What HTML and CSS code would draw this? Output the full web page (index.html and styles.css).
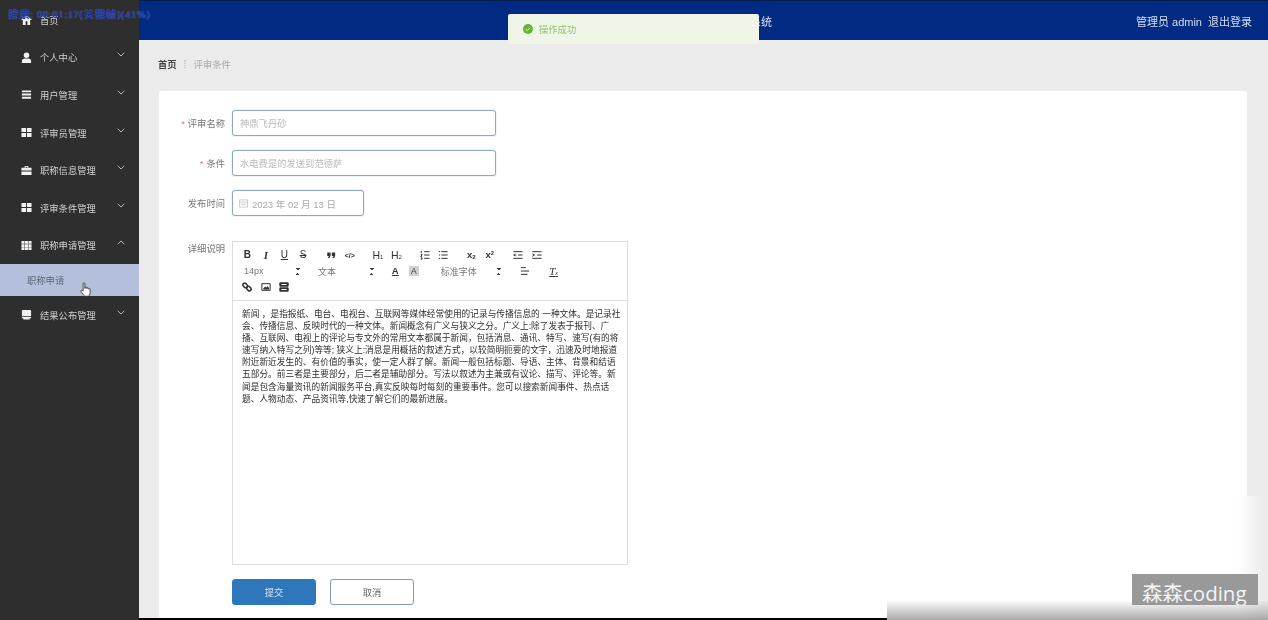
FILE: index.html
```html
<!DOCTYPE html>
<html lang="zh-CN">
<head>
    <meta charset="UTF-8">
    <meta name="viewport" content="width=device-width, initial-scale=1.0">
    <title>评审条件</title>
    <link rel="stylesheet" href="styles.css">
</head>
<body>
    <div class="app">
        <aside class="sidebar">
            <div class="menu-item">
                <svg class="menu-icon" viewBox="0 0 12 12"><path d="M6 1 0 6.500h2V12h3V8h2v4h3V6.500h2z"/></svg>
                <span>首页</span>
            </div>
            <div class="menu-item">
                <svg class="menu-icon" viewBox="0 0 12 12"><circle cx="6" cy="3.500" r="3"/><path d="M1 12V9.500C1 8 2.500 7 4 7h4c1.500 0 3 1 3 2.500V12z"/></svg>
                <span>个人中心</span>
                <svg class="chevron" viewBox="0 0 8 5"><path d="M.7.8 4 4 7.300.8"/></svg>
            </div>
            <div class="menu-item">
                <svg class="menu-icon" viewBox="0 0 12 12"><path d="M1 1.500h10v2H1zM1 5h10v2H1zM1 8.500h10v2H1z"/></svg>
                <span>用户管理</span>
                <svg class="chevron" viewBox="0 0 8 5"><path d="M.7.8 4 4 7.300.8"/></svg>
            </div>
            <div class="menu-item">
                <svg class="menu-icon" viewBox="0 0 12 12"><path d="M.5 1h5v4.500h-5zM6.500 1h5v4.500h-5zM.5 6.500h5V11h-5zM6.500 6.500h5V11h-5z"/></svg>
                <span>评审员管理</span>
                <svg class="chevron" viewBox="0 0 8 5"><path d="M.7.8 4 4 7.300.8"/></svg>
            </div>
            <div class="menu-item">
                <svg class="menu-icon" viewBox="0 0 12 12"><path d="M4 1h4v2h3.500v3H.5V3H4zM5 2v1h2V2zM.5 7h11v4H.5z"/></svg>
                <span>职称信息管理</span>
                <svg class="chevron" viewBox="0 0 8 5"><path d="M.7.8 4 4 7.300.8"/></svg>
            </div>
            <div class="menu-item">
                <svg class="menu-icon" viewBox="0 0 12 12"><path d="M.5 1h5v4.500h-5zM6.500 1h5v4.500h-5zM.5 6.500h5V11h-5zM6.500 6.500h5V11h-5z"/></svg>
                <span>评审条件管理</span>
                <svg class="chevron" viewBox="0 0 8 5"><path d="M.7.8 4 4 7.300.8"/></svg>
            </div>
            <div class="menu-item">
                <svg class="menu-icon" viewBox="0 0 12 12"><path d="M.5 1h3.300v3H.5zM4.300 1h3.400v3H4.300zM8.200 1h3.300v3H8.200zM.5 4.500h3.300v3H.5zM4.300 4.500h3.400v3H4.300zM8.200 4.500h3.300v3H8.200zM.5 8h3.300v3H.5zM4.300 8h3.400v3H4.300zM8.200 8h3.300v3H8.200z"/></svg>
                <span>职称申请管理</span>
                <svg class="chevron" viewBox="0 0 8 5"><path d="M.7 4.200 4 1l3.300 3.200"/></svg>
            </div>
            <div class="submenu-item">职称申请</div>
            <div class="menu-item">
                <svg class="menu-icon" viewBox="0 0 12 12"><path d="M2 1h8a1 1 0 0 1 1 1v6H1V2a1 1 0 0 1 1-1zM1 8.800h10V10H9.500v1.500h-7V10H1z"/></svg>
                <span>结果公布管理</span>
                <svg class="chevron" viewBox="0 0 8 5"><path d="M.7.8 4 4 7.300.8"/></svg>
            </div>
        </aside>

        <div class="main">
            <header class="topbar">
                <div class="topbar-title">职称评审管理系统</div>
                <div class="topbar-user">管理员 admin<span class="logout">退出登录</span></div>
            </header>

            <div class="content">
                <div class="breadcrumb">
                    <b>首页</b>
                    <i class="crumb-sep"></i>
                    <span>评审条件</span>
                </div>

                <div class="card">
                    <div class="form-row">
                        <label class="form-label"><em>*</em>评审名称</label>
                        <input class="field" type="text" placeholder="神鼎飞丹砂">
                    </div>
                    <div class="form-row">
                        <label class="form-label"><em>*</em>条件</label>
                        <input class="field" type="text" placeholder="水电费是的发送到范德萨">
                    </div>
                    <div class="form-row">
                        <label class="form-label">发布时间</label>
                        <div class="field date-field">
                            <svg class="date-icon" viewBox="0 0 10 10"><path d="M.5 1h9v8h-9zM.5 3.500h9M2 6h6"/></svg>
                            <span>2023 年 02 月 13 日</span>
                        </div>
                    </div>
                    <div class="form-row editor-row">
                        <label class="form-label">详细说明</label>
                        <div class="editor">
                            <div class="toolbar">
                                <div class="tool-row">
                                    <div class="tool-group">
                                        <span class="tool bold">B</span>
                                        <span class="tool serif-i">I</span>
                                        <span class="tool under">U</span>
                                        <span class="tool strike">S</span>
                                    </div>
                                    <div class="tool-group">
                                        <span class="tool"><svg class="tool-svg solid" viewBox="0 0 12 12"><path d="M1.500 3h4v3.500C5.500 8.500 4 9.500 2.500 10l-.5-1c.8-.4 1.300-1 1.400-1.800H1.500zM7 3h4v3.500C11 8.500 9.500 9.500 8 10l-.5-1c.8-.4 1.300-1 1.400-1.800H7z"/></svg></span>
                                        <span class="tool code">&lt;/&gt;</span>
                                    </div>
                                    <div class="tool-group">
                                        <span class="tool head">H<sub>1</sub></span>
                                        <span class="tool head">H<sub>2</sub></span>
                                    </div>
                                    <div class="tool-group">
                                        <span class="tool"><svg class="tool-svg" viewBox="0 0 12 12"><path d="M5 2h6.500M5 6h6.500M5 10h6.500M1.500 1v3M1 5.500h1.500L1 8h1.500M1 9.500h1.500V11H1"/></svg></span>
                                        <span class="tool"><svg class="tool-svg" viewBox="0 0 12 12"><path d="M4 2h7.500M4 6h7.500M4 10h7.500M1 2h1.500M1 6h1.500M1 10h1.500"/></svg></span>
                                    </div>
                                    <div class="tool-group">
                                        <span class="tool script">x<sub>2</sub></span>
                                        <span class="tool script">x<sup>2</sup></span>
                                    </div>
                                    <div class="tool-group">
                                        <span class="tool"><svg class="tool-svg" viewBox="0 0 12 12"><path d="M.5 2h11M6 6h5.500M.5 10h11M1 6h3M1 6l1.500-1.500M1 6l1.500 1.500"/></svg></span>
                                        <span class="tool"><svg class="tool-svg" viewBox="0 0 12 12"><path d="M.5 2h11M6 6h5.500M.5 10h11M.5 4.500 3 6 .5 7.500"/></svg></span>
                                    </div>
                                </div>
                                <div class="tool-row">
                                    <div class="picker size-picker">14px<span class="picker-arrows"></span></div>
                                    <div class="picker head-picker">文本<span class="picker-arrows"></span></div>
                                    <div class="tool-group">
                                        <span class="tool color-a">A</span>
                                        <span class="tool"><span class="bg-a">A</span></span>
                                    </div>
                                    <div class="picker font-picker">标准字体<span class="picker-arrows"></span></div>
                                    <div class="tool-group">
                                        <span class="tool"><svg class="tool-svg" viewBox="0 0 12 12"><path d="M1 2h6M1 6h10M1 10h8"/></svg></span>
                                    </div>
                                    <div class="tool-group">
                                        <span class="tool clean">T<sub>x</sub></span>
                                    </div>
                                </div>
                                <div class="tool-row">
                                    <div class="tool-group">
                                        <span class="tool"><svg class="tool-svg thick" viewBox="0 0 12 12"><rect x="0.800" y="2" width="6" height="4.200" rx="2.100" transform="rotate(45 3.800 4.100)"/><rect x="5.200" y="5.800" width="6" height="4.200" rx="2.100" transform="rotate(45 8.200 7.900)"/></svg></span>
                                        <span class="tool"><svg class="tool-svg" viewBox="0 0 12 12"><path d="M1 2h10v8H1z"/><path class="icon-fill" d="M3 8.500 5 6l1.500 1.200L8 5.500l1.500 3z"/></svg></span>
                                        <span class="tool"><svg class="tool-svg" viewBox="0 0 12 12"><path class="icon-fill" d="M1 1h10v4H1zM1 7h10v4H1z"/><path class="icon-light" d="M3 3h6M3 9h6"/></svg></span>
                                    </div>
                                </div>
                            </div>
                            <div class="editor-body">新闻 ，是指报纸、电台、电视台、互联网等媒体经常使用的记录与传播信息的 一种文体。是记录社会、传播信息、反映时代的一种文体。新闻概念有广义与狭义之分。广义上:除了发表于报刊、广播、互联网、电视上的评论与专文外的常用文本都属于新闻，包括消息、通讯、特写、速写(有的将速写纳入特写之列)等等; 狭义上:消息是用概括的叙述方式，以较简明扼要的文字，迅速及时地报道附近新近发生的、有价值的事实，使一定人群了解。新闻一般包括标题、导语、主体、背景和结语五部分。前三者是主要部分，后二者是辅助部分。写法以叙述为主兼或有议论、描写、评论等。新闻是包含海量资讯的新闻服务平台,真实反映每时每刻的重要事件。您可以搜索新闻事件、热点话题、人物动态、产品资讯等,快速了解它们的最新进展。</div>
                        </div>
                    </div>
                    <div class="form-actions">
                        <button class="btn btn-primary">提交</button>
                        <button class="btn">取消</button>
                    </div>
                </div>
            </div>
        </div>

        <div class="toast">
            <svg class="toast-icon" viewBox="0 0 10 10"><circle cx="5" cy="5" r="5"/><path d="M2.800 5.100 4.400 6.600 7.200 3.700"/></svg>
            操作成功
        </div>

        <svg class="hand-cursor" viewBox="0 0 14 20"><path d="M4 2a1.100 1.100 0 0 1 2.200 0v6l.4-.1V7a1 1 0 0 1 2 0v1l.4.1a1 1 0 0 1 2 .2v.6a1 1 0 0 1 1.900.3v4.300c0 2.500-1.400 4.500-4 4.500H7.500c-1.700 0-2.700-.9-3.500-2.300L1.300 11.800c-.7-1.300.9-2.300 1.900-1.200L4 11.500z"/></svg>
    </div>

    <div class="seek-label">搜索: 00:01:17(关键帧)(41%)</div>
    <div class="corner-patch">
        <div class="watermark">森森coding</div>
    </div>
</body>
</html>
```

FILE: styles.css
```css
* {
    box-sizing: border-box;
}

body {
    margin: 0;
    width: 1268px;
    height: 620px;
    overflow: hidden;
    position: relative;
    background: #000;
    font-family: "Liberation Sans", "Noto Sans CJK SC", sans-serif;
}

.app {
    display: flex;
    height: 620px;
    position: relative;
    filter: blur(0.45px);
}

/* sidebar */
.sidebar {
    width: 139px;
    flex-shrink: 0;
    padding-top: 1px;
    background: #2e2e2e;
}

.menu-item {
    display: flex;
    align-items: center;
    height: 37.6px;
    padding: 0 14px 0 21px;
    color: #d2d2d2;
    font-size: 9.3px;
}

.menu-icon {
    width: 11px;
    height: 11px;
    margin-right: 8px;
    fill: #f2f2f2;
}

.chevron {
    width: 8px;
    height: 5px;
    margin-left: auto;
    margin-top: -5px;
    fill: none;
    stroke: #b5b5b5;
    stroke-width: 1;
}

.submenu-item {
    display: flex;
    align-items: center;
    height: 32px;
    padding-left: 27px;
    background: #b4bfdb;
    color: #5c6678;
    font-size: 9.3px;
}

/* top bar */
.main {
    flex: 1;
    display: flex;
    flex-direction: column;
    min-width: 0;
    padding-bottom: 2px;
}

.topbar {
    display: flex;
    align-items: center;
    height: 40px;
    padding-right: 16px;
    background: #012a83;
    border-top: 1px solid #041a4a;
    color: #d5deee;
    font-size: 11px;
}

.topbar-title {
    margin-left: auto;
}

.topbar-user {
    margin-left: 364px;
}

.logout {
    margin-left: 6px;
}

/* content */
.content {
    flex: 1;
    display: flex;
    flex-direction: column;
    min-height: 0;
    padding: 0 21px 0 20px;
    background: #ebebeb;
}

.breadcrumb {
    display: flex;
    align-items: center;
    height: 51px;
    margin-left: -1px;
    padding-bottom: 3px;
    font-size: 9.300px;
    color: #aaa;
}

.breadcrumb b {
    color: #444;
}

.crumb-sep {
    width: 2px;
    height: 8px;
    margin: 0 7.500px;
    border-left: 1px dotted #ccc;
    border-right: 1px dotted #ccc;
}

.card {
    flex: 1;
    padding-top: 19px;
    background: #fff;
    border-radius: 2px;
}

.form-row {
    display: flex;
    align-items: center;
    margin-bottom: 14px;
}

.form-label {
    width: 66px;
    margin-right: 7px;
    text-align: right;
    color: #777;
    font-size: 9.3px;
}

.form-label em {
    margin-right: 3px;
    color: #e57373;
    font-style: normal;
}

.field {
    width: 264px;
    height: 26px;
    padding: 1px 7px 0;
    background: #fff;
    border: 1px solid #90a6c6;
    border-radius: 3px;
    box-shadow: 0 0 1.500px #b5c4dc;
    color: #aaa;
    font-family: inherit;
    font-size: 9.3px;
    outline: none;
}

.field::placeholder {
    color: #b8b8b8;
}

.date-field {
    display: flex;
    align-items: center;
    width: 132px;
    padding-left: 6px;
    font-size: 9.5px;
}

.date-icon {
    width: 9px;
    height: 9px;
    margin-right: 4px;
    fill: none;
    stroke: #bbb;
    stroke-width: 0.8;
}

/* editor */
.editor-row {
    align-items: flex-start;
    margin-top: 25px;
    margin-bottom: 14px;
}

.editor {
    width: 396px;
    height: 324px;
    border: 1px solid #ddd;
}

.toolbar {
    height: 59px;
    padding: 5px 0 0 5px;
    border-bottom: 1px solid #ddd;
}

.tool-row {
    display: flex;
    height: 16px;
}

.tool-group {
    display: flex;
    margin-right: 9.5px;
}

.tool {
    display: flex;
    align-items: center;
    justify-content: center;
    width: 18.6px;
    height: 16px;
    color: #333;
    font-size: 10px;
    line-height: 1;
}

.tool sub,
.tool sup {
    font-size: 6px;
    line-height: 1;
}

.tool sub {
    align-self: flex-end;
    margin-bottom: 3px;
}

.tool sup {
    align-self: flex-start;
    margin-top: 3px;
}

.tool-svg {
    width: 10px;
    height: 10px;
    fill: none;
    stroke: #333;
    stroke-width: 1.200;
}

.tool-svg.thick {
    stroke-width: 1.800;
}

.tool-svg.solid {
    fill: #333;
    stroke: none;
}

.icon-fill {
    fill: #333;
}

.icon-light {
    stroke: #fff;
}

.bold {
    font-weight: bold;
}

.serif-i {
    font-family: "Liberation Serif", serif;
    font-style: italic;
    font-size: 11px;
    font-weight: bold;
}

.under {
    text-decoration: underline;
}

.strike {
    text-decoration: line-through;
}

.code {
    font-size: 7px;
    font-weight: bold;
}

.head {
    font-size: 10.5px;
}

.script {
    font-weight: bold;
    font-size: 9.5px;
}

.color-a {
    font-size: 9.5px;
    font-weight: bold;
    text-decoration: underline;
}

.bg-a {
    padding: 1px 2px;
    background: #d2d2d2;
    font-size: 8.5px;
}

.clean {
    font-family: "Liberation Serif", serif;
    font-style: italic;
    text-decoration: underline;
    font-size: 11px;
}

.picker {
    display: flex;
    align-items: center;
    position: relative;
    margin-right: 9.5px;
    padding-left: 6px;
    color: #777;
    font-size: 9px;
}

.size-picker,
.head-picker {
    width: 64.500px;
}

.font-picker {
    width: 74px;
    padding-left: 8px;
}

.font-picker .picker-arrows {
    right: 6px;
}

.picker-arrows {
    position: absolute;
    top: 5px;
    right: 3px;
    width: 4px;
    height: 7px;
    background:
        linear-gradient(45deg, transparent 50%, #444 50%) 0 0 / 2px 2px no-repeat,
        linear-gradient(-45deg, transparent 50%, #444 50%) 2px 0 / 2px 2px no-repeat,
        linear-gradient(135deg, transparent 50%, #444 50%) 0 5px / 2px 2px no-repeat,
        linear-gradient(-135deg, transparent 50%, #444 50%) 2px 5px / 2px 2px no-repeat;
}

.editor-body {
    padding: 7px 5px 0 9px;
    color: #2c2c2c;
    font-size: 8.7px;
    line-height: 12.100px;
}

.form-actions {
    display: flex;
    gap: 14px;
    margin-left: 73px;
}

.btn {
    width: 84px;
    height: 26px;
    padding: 0;
    background: #fff;
    border: 1px solid #7f98b5;
    border-radius: 3px;
    color: #666;
    font-family: inherit;
    font-size: 9.3px;
}

.btn-primary {
    background: #2e77bc;
    border-color: #2e77bc;
    color: #d9e6f3;
}

/* things lying over the page */
.toast {
    position: absolute;
    top: 14px;
    left: 508px;
    display: flex;
    align-items: center;
    width: 251px;
    height: 30px;
    padding-left: 15px;
    background: #eff6e8;
    border-radius: 2px;
    color: #8fc46f;
    font-size: 9.3px;
}

.toast-icon {
    width: 10px;
    height: 10px;
    margin-right: 6px;
    fill: #67b23a;
    stroke: none;
}

.toast-icon path {
    fill: none;
    stroke: #eff6e8;
    stroke-width: 1;
}

.hand-cursor {
    position: absolute;
    top: 282px;
    left: 80px;
    width: 11px;
    height: 16px;
    fill: #fff;
    stroke: #222;
    stroke-width: 1;
}

.seek-label {
    position: absolute;
    top: 8px;
    left: 8px;
    color: #14298a;
    font-family: "Liberation Serif", "Noto Sans CJK SC", serif;
    font-size: 10.500px;
    line-height: 14px;
    letter-spacing: 0.630px;
    white-space: pre;
    text-shadow: 0 0 1px #4f74dc, 0 0 1px #4f74dc;
}

.corner-patch {
    position: absolute;
    top: 496px;
    left: 887px;
    width: 381px;
    height: 124px;
    background:
        linear-gradient(to bottom, rgba(160, 160, 160, 0) 84%, rgba(160, 160, 160, 0.9) 100%),
        linear-gradient(to right, #fff 92%, #ebebeb 99%);
}

.watermark {
    position: absolute;
    top: 78px;
    left: 245px;
    width: 126px;
    height: 31px;
    overflow: hidden;
    padding-left: 10px;
    background: #999;
    color: #f4f4f4;
    font-family: "Open Sans", "Noto Sans CJK SC", sans-serif;
    font-size: 20.500px;
    line-height: 38px;
}
```
